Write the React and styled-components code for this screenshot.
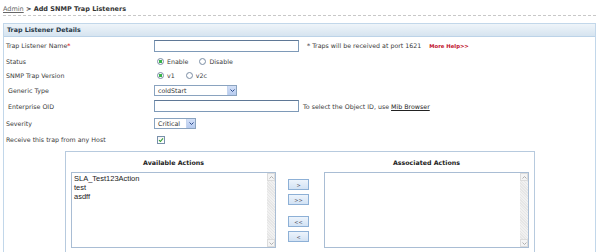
import React from "react";
import styled, { createGlobalStyle } from "styled-components";

const Global = createGlobalStyle`
  html, body { margin: 0; padding: 0; overflow: hidden; background: #fff; }
  body { font-family: "DejaVu Sans", Verdana, sans-serif; font-size: 6.3px; color: #3a3a3a; }
  * { box-sizing: border-box; }
`;

const Page = styled.div`
  width: 600px;
  height: 252px;
  padding: 0 4px 0 3px;
  overflow: hidden;
`;

const Breadcrumb = styled.div`
  height: 16px;
  padding-top: 2px;
  line-height: 14px;
  font-size: 6.5px;
  font-weight: bold;
  color: #333;
  border-bottom: 1px dashed #c8c8c8;
`;

const Crumb = styled.span`
  font-weight: normal;
  color: #666;
  text-decoration: underline;
`;

const Panel = styled.div`
  margin-top: 7px;
  border: 1px solid #c2d7ea;
  border-bottom: none;
  height: 240px;
`;

const PanelHeader = styled.div`
  height: 13px;
  line-height: 12px;
  padding-left: 3px;
  font-weight: bold;
  color: #2a3a4a;
  background: linear-gradient(#eef4f9, #d6e4f0);
  border-bottom: 1px solid #bcd3e8;
`;

const Row = styled.div`
  display: grid;
  grid-template-columns: 150px 1fr;
  align-items: center;
  height: ${(p) => p.h}px;
`;

const Label = styled.div`
  padding-left: ${(p) => (p.indent ? 4 : 2)}px;
  white-space: nowrap;
`;

const Req = styled.span`
  color: #d00;
`;

const Control = styled.div`
  display: flex;
  align-items: center;
  white-space: nowrap;
`;

const TextInput = styled.div`
  width: ${(p) => p.w}px;
  height: 12px;
  border: 1px solid #7e9ab8;
  border-top-color: #5f7896;
  background: #fff;
`;

const Hint = styled.span`
  margin-left: ${(p) => p.gap}px;
`;

const HelpLink = styled.span`
  margin-left: 8px;
  color: #c0102a;
  font-size: 5.3px;
  font-weight: bold;
`;

const UnderLink = styled.span`
  text-decoration: underline;
  color: #222;
`;

const Option = styled.span`
  display: flex;
  align-items: center;
  margin-left: ${(p) => p.gap}px;
`;

const Radio = styled.span`
  width: 7px;
  height: 7px;
  border-radius: 50%;
  border: 1px solid #7d8fa6;
  background: radial-gradient(circle at 50% 50%, ${(p) => (p.checked ? "#39b44a 0 1.6px, #fff 1.7px" : "#fff 0, #fff")} , #e2e6ea);
  margin-right: 3px;
`;

const CheckBox = styled.span`
  margin-left: 3px;
  width: 8px;
  height: 8px;
  border: 1px solid #7890ab;
  background: linear-gradient(#f4f4f4, #fff);
  display: flex;
  align-items: center;
  justify-content: center;
`;

const Select = styled.div`
  width: ${(p) => p.w}px;
  height: 11px;
  border: 1px solid #8aa3bf;
  background: #fff;
  display: flex;
  align-items: stretch;
`;

const SelectText = styled.span`
  flex: 1;
  padding-left: 3px;
  line-height: 9px;
  color: #333;
`;

const SelectArrow = styled.span`
  width: 9px;
  background: linear-gradient(#d3e0f7, #b7cbef);
  border-left: 1px solid #c5d5ef;
  display: flex;
  align-items: center;
  justify-content: center;
`;

const ActionsBox = styled.div`
  margin: 5px 0 0 61px;
  width: 470px;
  height: 110px;
  border: 1px solid #b7cade;
  padding: 0 5px;
  display: grid;
  grid-template-columns: 205px 48px 205px;
  grid-template-rows: 20px 76px;
`;

const ColTitle = styled.div`
  display: flex;
  align-items: center;
  justify-content: center;
  font-weight: bold;
  color: #222;
  grid-column: ${(p) => p.col};
`;

const ListBox = styled.div`
  grid-row: 2;
  border: 1px solid #a9bdd4;
  background: #fff;
  display: flex;
`;

const ListItems = styled.div`
  flex: 1;
  padding: 1px 2px;
  font-family: "Liberation Sans", Arial, sans-serif;
  font-size: 7.5px;
  line-height: 9px;
  color: #222;
`;

const ScrollBar = styled.div`
  width: 8px;
  display: flex;
  flex-direction: column;
  justify-content: space-between;
  background: repeating-linear-gradient(45deg, #f1f1f1 0 1px, #e6e6e6 1px 2px);
`;

const ScrollArrow = styled.div`
  height: 8px;
  background: #f4f4f4;
  border: 1px solid #dcdcdc;
  display: flex;
  align-items: center;
  justify-content: center;
`;

const ButtonStack = styled.div`
  grid-row: 2;
  display: flex;
  flex-direction: column;
  align-items: flex-start;
  padding: 7px 0 0 12px;
`;

const MoveButton = styled.div`
  width: 21px;
  height: 11px;
  margin-top: ${(p) => p.gap}px;
  border: 1px solid #8db0d6;
  background: linear-gradient(#edf4fc, #d2e2f4);
  color: #556;
  font-size: 5px;
  display: flex;
  align-items: center;
  justify-content: center;
`;

const Chevron = ({ color = "#2c4a8a", up }) => (
  <svg width="5" height="3" viewBox="0 0 5 3">
    <path d={up ? "M0.5 2.5 L2.5 0.5 L4.5 2.5" : "M0.5 0.5 L2.5 2.5 L4.5 0.5"} fill="none" stroke={color} strokeWidth="1" />
  </svg>
);

const Dropdown = ({ w, value }) => (
  <Select w={w}>
    <SelectText>{value}</SelectText>
    <SelectArrow>
      <Chevron />
    </SelectArrow>
  </Select>
);

const List = ({ items }) => (
  <ListBox>
    <ListItems>
      {items.map((it) => (
        <div key={it}>{it}</div>
      ))}
    </ListItems>
    <ScrollBar>
      <ScrollArrow>
        <Chevron up color="#b0b0b0" />
      </ScrollArrow>
      <ScrollArrow>
        <Chevron color="#b0b0b0" />
      </ScrollArrow>
    </ScrollBar>
  </ListBox>
);

export default function App() {
  return (
    <>
      <Global />
      <Page>
        <Breadcrumb>
          <Crumb>Admin</Crumb> &gt; Add SNMP Trap Listeners
        </Breadcrumb>
        <Panel>
          <PanelHeader>Trap Listener Details</PanelHeader>
          <Row h={17}>
            <Label>
              Trap Listener Name<Req>*</Req>
            </Label>
            <Control>
              <TextInput w={145} />
              <Hint gap={8}>* Traps will be received at port 1621</Hint>
              <HelpLink>More Help&gt;&gt;</HelpLink>
            </Control>
          </Row>
          <Row h={14}>
            <Label>Status</Label>
            <Control>
              <Option gap={3}>
                <Radio checked />
                Enable
              </Option>
              <Option gap={11}>
                <Radio />
                Disable
              </Option>
            </Control>
          </Row>
          <Row h={14}>
            <Label>SNMP Trap Version</Label>
            <Control>
              <Option gap={3}>
                <Radio checked />
                v1
              </Option>
              <Option gap={11}>
                <Radio />
                v2c
              </Option>
            </Control>
          </Row>
          <Row h={16}>
            <Label indent>Generic Type</Label>
            <Control>
              <Dropdown w={83} value="coldStart" />
            </Control>
          </Row>
          <Row h={16}>
            <Label indent>Enterprise OID</Label>
            <Control>
              <TextInput w={145} />
              <Hint gap={4}>
                To select the Object ID, use <UnderLink>Mib Browser</UnderLink>
              </Hint>
            </Control>
          </Row>
          <Row h={19}>
            <Label>Severity</Label>
            <Control>
              <Dropdown w={42} value="Critical" />
            </Control>
          </Row>
          <Row h={13}>
            <Label>Receive this trap from any Host</Label>
            <Control>
              <CheckBox>
                <svg width="6" height="6" viewBox="0 0 6 6">
                  <path d="M1 3.2 L2.4 4.5 L5 1.4" fill="none" stroke="#2f9e2f" strokeWidth="1.1" />
                </svg>
              </CheckBox>
            </Control>
          </Row>
          <ActionsBox>
            <ColTitle col={1}>Available Actions</ColTitle>
            <ColTitle col={3}>Associated Actions</ColTitle>
            <List items={["SLA_Test123Action", "test", "asdff"]} />
            <ButtonStack>
              <MoveButton gap={0}>&gt;</MoveButton>
              <MoveButton gap={4}>&gt;&gt;</MoveButton>
              <MoveButton gap={11}>&lt;&lt;</MoveButton>
              <MoveButton gap={4}>&lt;</MoveButton>
            </ButtonStack>
            <List items={[]} />
          </ActionsBox>
        </Panel>
      </Page>
    </>
  );
}
